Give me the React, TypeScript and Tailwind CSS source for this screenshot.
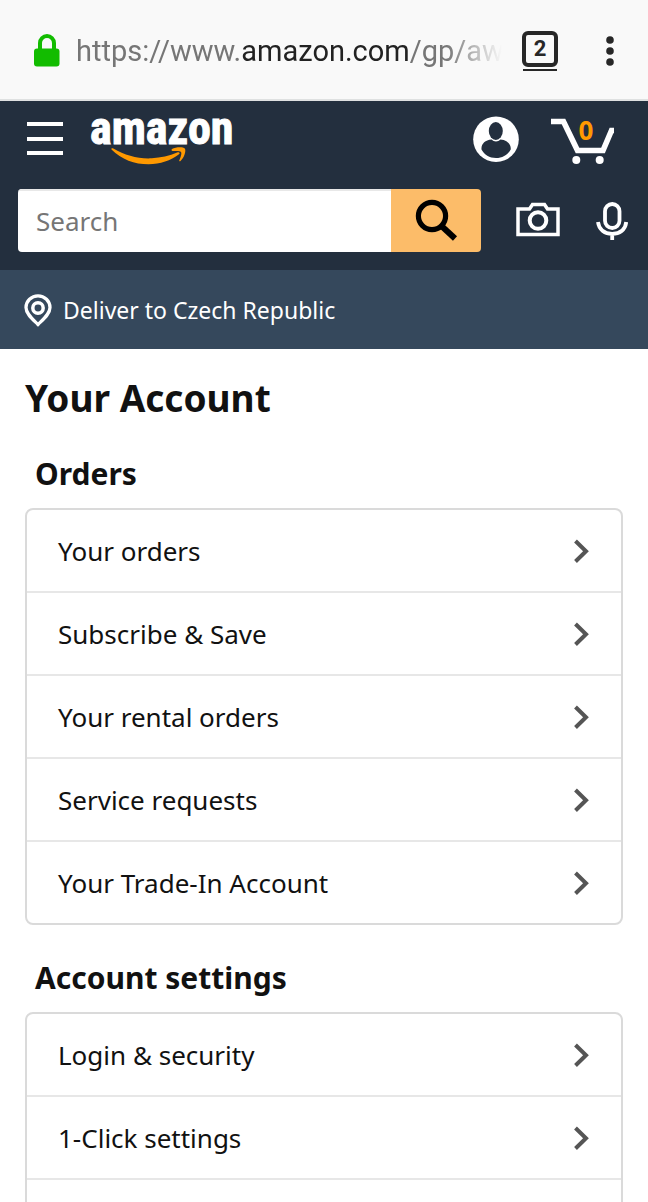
import React from "react";

const orders = [
  "Your orders",
  "Subscribe & Save",
  "Your rental orders",
  "Service requests",
  "Your Trade-In Account",
];

const settings = ["Login & security", "1-Click settings"];

function BrowserBar() {
  return (
    <div className="flex h-[101px] items-center border-b-2 border-[#dfe1e1] bg-[#f9f9f9] pt-0.5 pr-7 pl-[34px] font-[Roboto,sans-serif]">
      <svg width="26" height="34" viewBox="0 0 26 34" className="shrink-0" aria-label="Secure connection">
        <path d="M6 17V9a7 7 0 0 1 14 0V17" fill="none" stroke="#12bc00" strokeWidth="4" />
        <rect x="0" y="14.500" width="25.500" height="18" rx="3" fill="#12bc00" />
      </svg>
      <div className="ml-4 min-w-0 flex-1 text-[29px] leading-9 whitespace-nowrap text-[#767676] [mask-image:linear-gradient(to_right,#000_calc(100%-56px),transparent)]">
        https://www.<span className="text-[#222]">amazon.com</span>/gp/aw
      </div>
      <button
        type="button"
        aria-label="Open tabs"
        className="ml-5 flex shrink-0 flex-col items-center gap-0.5 text-[#272727]"
      >
        <span className="flex size-9 items-center justify-center rounded-md border-4 border-[#272727] text-[22px] leading-6 font-bold">
          2
        </span>
        <span className="h-0.5 w-[34px] bg-[#272727]" />
      </button>
      <button type="button" aria-label="Menu" className="ml-[42px] shrink-0">
        <svg width="20" height="32" viewBox="0 0 20 32" fill="#272727">
          <circle cx="10" cy="5" r="3.800" />
          <circle cx="10" cy="16" r="3.800" />
          <circle cx="10" cy="27" r="3.800" />
        </svg>
      </button>
    </div>
  );
}

function Header() {
  return (
    <header className="bg-[#232f3e] text-white">
      <div className="flex h-[88px] items-start pr-[34px] pl-[26px]">
        <button type="button" aria-label="Open navigation" className="mt-[21px] shrink-0">
          <svg width="38" height="34" viewBox="0 0 38 34" fill="#fff">
            <rect x="1" y="0" width="36" height="4" />
            <rect x="1" y="15" width="36" height="4" />
            <rect x="1" y="29" width="36" height="4" />
          </svg>
        </button>
        <a href="#home" className="ml-[26px] flex flex-col">
          <span className="mt-[5px] h-[39px] font-['Liberation_Sans_Narrow','Roboto_Condensed',sans-serif] text-[46px] leading-[44px] font-bold [-webkit-text-stroke:1px_#fff]">
            amazon
          </span>
          <svg width="76" height="20" viewBox="0 0 76 20" className="ml-[21px]" fill="#ff9900" aria-hidden="true">
            <path d="M.5 4.500C0 3.300 1.200 2.900 2.300 3.600c12 7 25 10.400 38.500 9.700 9-.500 17.200-2.300 26-6 1.500-.600 2.500 1 1.200 2C59.500 15.500 49.500 19.300 37.500 19.300 23.500 19.300 10.500 14.500 .5 4.500z" />
            <path d="M61 4.100c3.500-2.200 11-2.600 12.800-.600 1.600 2.300-.500 9.200-4.300 12.500-.700.700-1.600.200-1.200-.700 1.300-3 2.700-6.800 1.700-8.300-1-1.400-5.300-1.200-8.300-.900-1.200.1-1.500-1.300-.700-2z" />
          </svg>
        </a>
        <a href="#account" aria-label="Your account" className="mt-[15px] ml-auto shrink-0">
          <svg width="46" height="46" viewBox="0 0 46 46">
            <circle cx="23" cy="23.200" r="22.800" fill="#fff" />
            <ellipse cx="22.800" cy="15" rx="7" ry="9" fill="#232f3e" />
            <path d="M8.500 33.500C8 28 12 24 18.500 23.500c2.500 2.600 6.500 2.600 9 0C34 24 38.300 28 37.700 33.500 35 38.500 29.500 42 23 42S11.200 38.500 8.500 33.500z" fill="#232f3e" />
          </svg>
        </a>
        <a href="#cart" aria-label="Cart, 0 items" className="relative mt-[15px] ml-[31px] shrink-0">
          <svg width="64" height="50" viewBox="0 0 64 50">
            <path d="M1 5.500h12.500L27.500 34.500h25.500L61.500 14.500h2.500" fill="none" stroke="#fff" strokeWidth="5.600" />
            <circle cx="26.300" cy="44" r="4" fill="#fff" />
            <circle cx="49.700" cy="44" r="4" fill="#fff" />
          </svg>
          <span className="absolute inset-x-0 top-0 pl-2 text-center font-['Open_Sans',sans-serif] text-[26px] leading-7 font-bold text-[#ff9900]">
            0
          </span>
        </a>
      </div>
      <form className="flex items-center pr-5 pb-[18px] pl-[18px]" onSubmit={(e) => e.preventDefault()}>
        <div className="flex h-[63px] min-w-0 flex-1 overflow-hidden rounded">
          <input
            type="search"
            aria-label="Search"
            placeholder="Search"
            className="min-w-0 flex-1 border-t-2 border-[#e8e8e8] bg-white px-[18px] text-[26px] text-[#111] placeholder:text-[#767676]"
          />
          <button type="submit" aria-label="Go" className="flex w-[90px] shrink-0 items-center justify-center bg-[#fcbc69]">
            <svg width="44" height="44" viewBox="0 0 44 44" fill="none" stroke="#000">
              <circle cx="18" cy="17" r="13.600" strokeWidth="5.200" />
              <path d="M27.500 27L41 39.500" strokeWidth="6" />
            </svg>
          </button>
        </div>
        <button type="button" aria-label="Search by photo" className="ml-[35px] shrink-0">
          <svg width="44" height="38" viewBox="0 0 44 38" fill="none" stroke="#fff">
            <path d="M2 7h11.500l3-4.500h12l3 4.500H42V32.500H2z" strokeWidth="3.500" />
            <circle cx="22" cy="18.500" r="8.300" strokeWidth="4" />
          </svg>
        </button>
        <button type="button" aria-label="Search by voice" className="ml-9 shrink-0">
          <svg width="32" height="40" viewBox="0 0 32 40" fill="none" stroke="#fff" strokeWidth="3.800">
            <rect x="9" y="3" width="14.500" height="24" rx="7.250" />
            <path d="M2 21c1 8 7 11.800 14.200 11.800S29.500 29 30.200 21M16.200 33v6" />
          </svg>
        </button>
      </form>
    </header>
  );
}

function DeliverTo() {
  return (
    <a href="#location" className="flex h-[79px] items-center gap-[11px] bg-[#35485c] px-6 pt-0.5 text-[23px] text-white">
      <svg width="28" height="34" viewBox="0 0 28 34" fill="none" stroke="#fff" className="shrink-0" aria-hidden="true">
        <path d="M14 30.500C9 25.500 2 20 2 13.500a12 11.700 0 0 1 24 0C26 20 19 25.500 14 30.500z" strokeWidth="3.300" />
        <circle cx="14" cy="14" r="5.200" strokeWidth="3.500" />
      </svg>
      Deliver to Czech Republic
    </a>
  );
}

function Section({ title, items, continues = false }: { title: string; items: string[]; continues?: boolean }) {
  return (
    <section className="mb-[30px]">
      <h2 className="mb-3 px-[10px] text-[30px] leading-[45px] font-bold">{title}</h2>
      <ul className="divide-y-2 divide-[#e7e7e7] rounded-lg border-2 border-[#dadada]">
        {items.map((item) => (
          <li key={item}>
            <a href="#item" className="flex h-[81px] items-center justify-between pr-[31px] pl-[31px] text-[26px] leading-9">
              {item}
              <svg width="16" height="24" viewBox="0 0 16 24" fill="none" stroke="#555" strokeWidth="4" aria-hidden="true">
                <path d="M1.500 2L12 12.200 1.500 22.500" />
              </svg>
            </a>
          </li>
        ))}
        {continues && <li className="h-[81px]" />}
      </ul>
    </section>
  );
}

export default function App() {
  return (
    <div className="h-screen overflow-hidden bg-white font-['Noto_Sans',sans-serif] text-[#111]">
      <BrowserBar />
      <Header />
      <DeliverTo />
      <main className="px-[25px] pt-[18px]">
        <h1 className="mb-[23px] text-[37px] leading-[61px] font-bold">Your Account</h1>
        <Section title="Orders" items={orders} />
        <Section title="Account settings" items={settings} continues />
      </main>
    </div>
  );
}
